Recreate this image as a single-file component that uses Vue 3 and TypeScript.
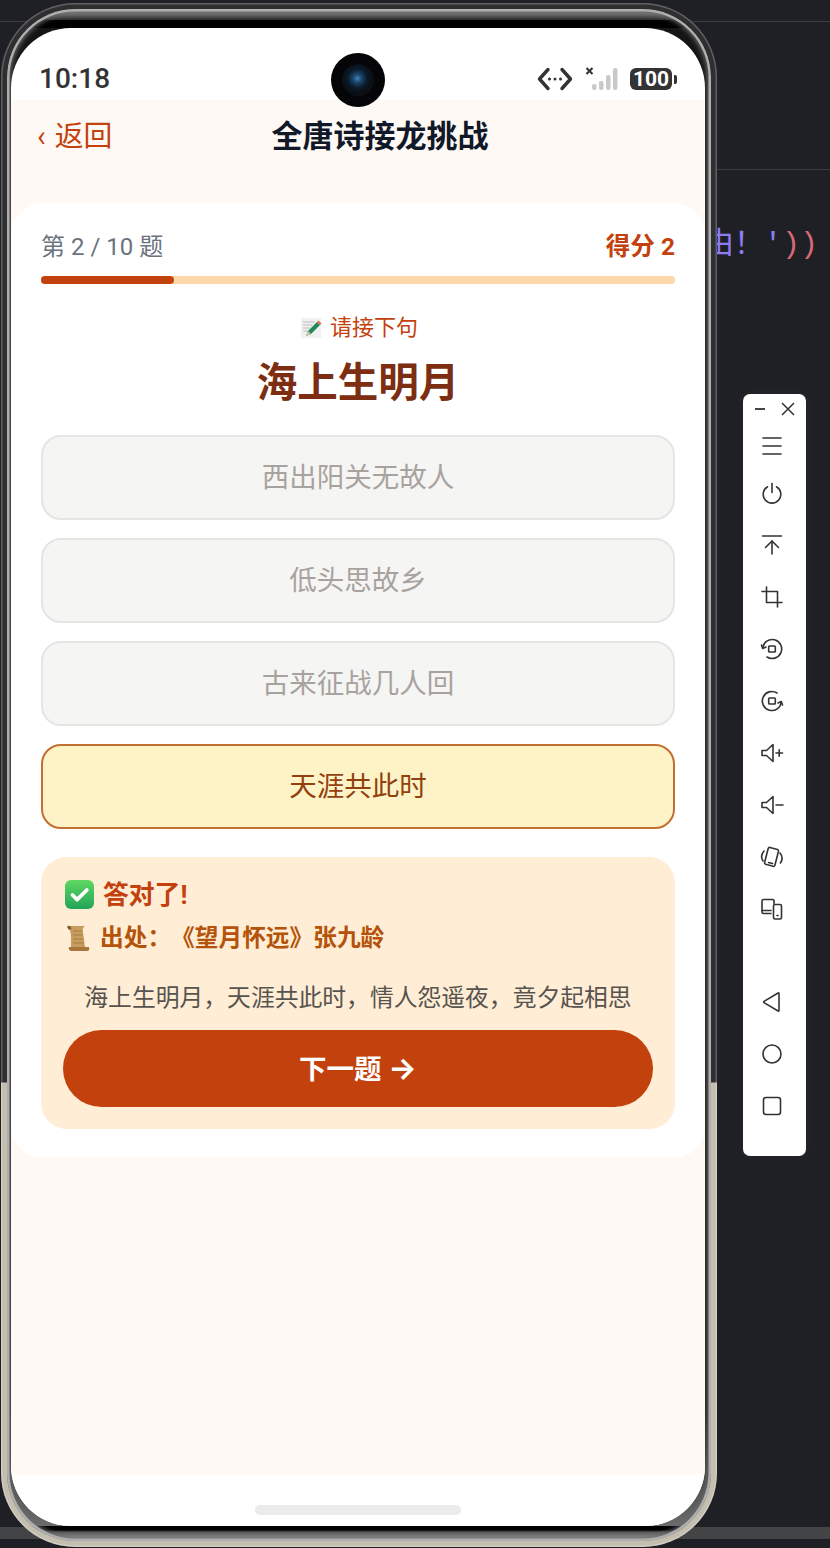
<template>
  <div class="desktop">
    <div class="bg-line line-top"></div>
    <div class="bg-line line-mid"></div>
    <div class="bg-bottom"></div>
    <div class="code-text"><span class="purple">由！'</span><span class="pink">))</span></div>

    <div class="phone">
      <div class="metal">
        <div class="screen">
          <div class="status-bar">
            <span class="time">10:18</span>
            <div class="status-icons">
              <svg width="36" height="24" viewBox="0 0 36 24" fill="none" stroke="#333" stroke-width="3.400" stroke-linecap="round" stroke-linejoin="round">
                <path d="M11 2.500 2.500 12l8.500 9.500" />
                <path d="M25 2.500 33.500 12 25 21.500" />
                <circle cx="12.500" cy="12" r="1.500" fill="#333" stroke="none" />
                <circle cx="18" cy="12" r="1.500" fill="#333" stroke="none" />
                <circle cx="23.500" cy="12" r="1.500" fill="#333" stroke="none" />
              </svg>
              <svg class="signal" width="33" height="24" viewBox="0 0 33 24" fill="#c9c9c9">
                <path d="M0.500 1 6.500 7M6.500 1 .5 7" stroke="#333" stroke-width="2" fill="none" />
                <rect x="6" y="17" width="4.500" height="6" rx="2" />
                <rect x="13" y="14" width="4.500" height="9" rx="2" />
                <rect x="20" y="8" width="4.500" height="15" rx="2" />
                <rect x="27" y="1" width="4.500" height="22" rx="2" />
              </svg>
              <div class="battery"><span class="battery-num">100</span><i class="battery-tip"></i></div>
            </div>
          </div>

          <div class="app">
            <header class="nav">
              <span class="back"><span class="chev">‹</span>返回</span>
              <h1 class="nav-title">全唐诗接龙挑战</h1>
            </header>

            <section class="card">
              <div class="progress-row">
                <span class="progress-text">第 2 / 10 题</span>
                <span class="score">得分 2</span>
              </div>
              <div class="progress-track">
                <div class="progress-fill" :style="{ width: progress + '%' }"></div>
              </div>

              <div class="hint">
                <svg width="22" height="22" viewBox="0 0 22 22">
                  <rect x="1" y="1" width="20" height="20" fill="#f1f1f1" />
                  <path d="M3 5h12M3 8h9M3 11h7M3 14h5" stroke="#bcbcbc" stroke-width="1" />
                  <path d="M6 19 8 14 17 5l3 3-9 9z" fill="#1f8a5c" />
                  <path d="M17 5l1.500-1.500 3 3L20 8z" fill="#e8674f" />
                  <path d="M6 19l2-5 3 3z" fill="#d9c4a0" />
                </svg>
                <span>请接下句</span>
              </div>
              <h2 class="question">海上生明月</h2>

              <div class="options">
                <div v-for="opt in options" :key="opt.text" class="option" :class="{ correct: opt.correct }">
                  {{ opt.text }}
                </div>
              </div>

              <div class="feedback">
                <div class="result">
                  <svg width="29" height="29" viewBox="0 0 29 29">
                    <defs>
                      <linearGradient id="checkBg" x1="0" y1="0" x2="0" y2="1">
                        <stop offset="0" stop-color="#5fd860" />
                        <stop offset="1" stop-color="#22a45a" />
                      </linearGradient>
                    </defs>
                    <rect width="29" height="29" rx="6" fill="url(#checkBg)" />
                    <path d="M7.500 15l4.600 4.600L21.800 10" fill="none" stroke="#fff" stroke-width="3.800" stroke-linecap="round" stroke-linejoin="round" />
                  </svg>
                  <span class="result-text">答对了!</span>
                </div>
                <div class="source">
                  <svg width="24" height="27" viewBox="0 0 24 27">
                    <path d="M2 1h17c-2 1-2.500 3-2 6l2 15H5C5 15 6 7 2 1z" fill="#c79c5f" />
                    <path d="M7 6h9M7 10h9M7 14h10M7 18h11" stroke="#a87c41" stroke-width="1" />
                    <path d="M1 2C2 0 5 0 5.500 4L3 5z" fill="#8a5a28" />
                    <path d="M3 22h20c.800 2 0 4-2 4H6c-2.500 0-4-2-3-4z" fill="#a8753a" />
                  </svg>
                  <span>出处：《望月怀远》张九龄</span>
                </div>
                <p class="verse">海上生明月，天涯共此时，情人怨遥夜，竟夕起相思</p>
                <button class="next-btn">下一题 <span class="arrow">→</span></button>
              </div>
            </section>
          </div>

          <div class="home-area"><div class="home-bar"></div></div>
        </div>
        <div class="camera"><i class="lens"></i></div>
      </div>
    </div>

    <aside class="toolbar">
      <div class="tool-top">
        <svg width="14" height="14" viewBox="0 0 14 14" stroke="#333" stroke-width="1.800" fill="none"><path d="M2 7h10" /></svg>
        <svg width="16" height="16" viewBox="0 0 16 16" stroke="#333" stroke-width="1.500" fill="none"><path d="M2 2l12 12M14 2 2 14" /></svg>
      </div>
      <div v-for="(group, g) in toolGroups" :key="g" class="tool-group">
        <div v-for="(icon, i) in group" :key="i" class="tool">
          <svg width="24" height="24" viewBox="0 0 24 24" fill="none" stroke="#333" stroke-width="1.600" stroke-linecap="round" stroke-linejoin="round">
            <path v-for="(d, k) in icon" :key="k" :d="d" />
          </svg>
        </div>
      </div>
    </aside>
  </div>
</template>

<script setup lang="ts">
interface Option {
  text: string
  correct?: boolean
}

const progress = 21

const options: Option[] = [
  { text: '西出阳关无故人' },
  { text: '低头思故乡' },
  { text: '古来征战几人回' },
  { text: '天涯共此时', correct: true }
]

// each icon is a list of path strokes
const toolGroups: string[][][] = [
  [
    ['M3 4h18', 'M3 12h18', 'M3 20h18'],
    ['M12 2.500v9', 'M7.500 5.800a8.800 8.800 0 1 0 9 0'],
    ['M2.500 3h19', 'M12 21V8', 'M5.500 14.500 12 8l6.500 6.500'],
    ['M6.500 2v15.500H22', 'M2 6.500h15.500V22'],
    ['M2.700 11A9.500 9.500 0 1 1 7 20', 'M1.500 8l1.200 3.500L6 10', 'M9.500 9h5a.8.8 0 0 1 .8.8v4.400a.8.8 0 0 1-.8.8h-5a.8.8 0 0 1-.8-.8V9.800a.8.8 0 0 1 .8-.8z'],
    ['M21.300 13A9.500 9.500 0 1 1 17 4', 'M22.500 16l-1.200-3.500L18 14', 'M9.500 9h5a.8.8 0 0 1 .8.8v4.400a.8.8 0 0 1-.8.8h-5a.8.8 0 0 1-.8-.8V9.800a.8.8 0 0 1 .8-.8z'],
    ['M2 9.500h4.500L13 3.500v17l-6.500-6H2z', 'M16 12h6.500', 'M19.200 8.700v6.600'],
    ['M2 9.500h4.500L13 3.500v17l-6.500-6H2z', 'M16 12h7'],
    ['M10 2.500l7.500 2a1.500 1.500 0 0 1 1 1.800l-3.600 14a1.500 1.500 0 0 1-1.800 1l-7.500-2a1.500 1.500 0 0 1-1-1.800l3.600-14a1.500 1.500 0 0 1 1.800-1z', 'M8.500 17.500l4 1', 'M4 6C1.500 9 1 13 3 16', 'M20 8c2.500 3 2.500 7 .5 10'],
    ['M14 6.500V4A1.500 1.500 0 0 0 12.500 2.500h-9A1.500 1.500 0 0 0 2 4v11A1.500 1.500 0 0 0 3.500 16.500H11', 'M2 13.500h9', 'M15 7.500h5A1.500 1.500 0 0 1 21.500 9v11.500A1.500 1.500 0 0 1 20 22h-5a1.500 1.500 0 0 1-1.500-1.500V9A1.500 1.500 0 0 1 15 7.500z', 'M17 18.500h1']
  ],
  [
    ['M19 3.500v17a.6.6 0 0 1-.9.5L4 12.600a.7.7 0 0 1 0-1.200L18.100 3a.6.6 0 0 1 .9.5z'],
    ['M12 3a9 9 0 1 0 0 18 9 9 0 0 0 0-18z'],
    ['M6 3.500h12A2.500 2.500 0 0 1 20.500 6v12a2.500 2.500 0 0 1-2.500 2.500H6A2.500 2.500 0 0 1 3.500 18V6A2.500 2.500 0 0 1 6 3.500z']
  ]
]
</script>

<style>
html,
body {
  margin: 0;
  background: #1f2025;
}
</style>

<style scoped>
.desktop {
  position: relative;
  width: 830px;
  height: 1548px;
  overflow: hidden;
  background: #1f2025;
  font-family: Roboto, 'Noto Sans CJK SC', sans-serif;
  text-spacing-trim: space-all;
}

.bg-line {
  position: absolute;
  height: 1px;
  background: #3c3d41;
}

.line-top {
  left: 0;
  right: 0;
  top: 21px;
}

.line-mid {
  left: 700px;
  right: 0;
  top: 169px;
}

.bg-bottom {
  position: absolute;
  left: 0;
  right: 0;
  top: 1527px;
  height: 12px;
  background: #434445;
}

.code-text {
  position: absolute;
  left: 704px;
  top: 228px;
  font: 30px/34px 'Liberation Mono', 'Noto Sans CJK SC', monospace;
  white-space: nowrap;
}

.purple {
  color: #8f7bf5;
}

.pink {
  color: #d9687a;
}

/* phone frame */
.phone {
  position: absolute;
  left: 1px;
  top: 3px;
  width: 716px;
  height: 1544px;
  box-sizing: border-box;
  padding: 6px;
  border-radius: 74px;
  background: linear-gradient(to bottom, #2f2f31 0, #2f2f31 1079px, #c4beaf 1080px, #c4beaf 100%);
  box-shadow: inset 0 0 0 1.500px rgba(255, 255, 255, 0.24);
}

.metal {
  position: relative;
  height: 100%;
  box-sizing: border-box;
  padding: 19px 6px 15px 4px;
  border-radius: 68px;
  background:
    linear-gradient(to bottom, #8e8e8e, #777 4px, #2a2a2a 11px, #000 11px) top / 100% 19px no-repeat,
    linear-gradient(to bottom, #000 0, #000 4px, #555 6px, #aaa 14px) bottom / 100% 15px no-repeat,
    linear-gradient(to bottom, #151515 0, #151515 1400px, #777 100%);
  box-shadow: inset 0 0 0 2.500px #aeaeae, inset 0 0 5px 4px #6a6a6a;
}

.screen {
  display: flex;
  flex-direction: column;
  height: 100%;
  overflow: hidden;
  border-radius: 60px;
  background: #fff;
}

.camera {
  position: absolute;
  left: 324px;
  top: 44px;
  display: flex;
  align-items: center;
  justify-content: center;
  width: 54px;
  height: 54px;
  border-radius: 50%;
  background: #050507;
}

.lens {
  width: 32px;
  height: 32px;
  border-radius: 50%;
  background: radial-gradient(circle at 48% 45%, #3f86bd 0, #1c4468 18%, #0a1a2b 40%, #0b0e12 62%, #16181c 100%);
}

.status-bar {
  display: flex;
  flex: none;
  align-items: center;
  justify-content: space-between;
  height: 72px;
  box-sizing: border-box;
  padding: 30px 28px 0;
}

.time {
  color: #333;
  font-size: 28px;
  font-weight: 500;
  line-height: 44px;
}

.status-icons {
  display: flex;
  align-items: center;
  gap: 13px;
}

.signal {
  margin-right: -2px;
}

.battery {
  display: flex;
  align-items: center;
}

.battery-num {
  width: 42px;
  height: 22px;
  border-radius: 6px;
  background: #333;
  color: #fff;
  font-size: 21px;
  font-weight: 700;
  line-height: 22px;
  text-align: center;
}

.battery-tip {
  width: 3px;
  height: 9px;
  margin-left: 2px;
  border-radius: 0 2px 2px 0;
  background: #333;
}

.app {
  flex: 1;
  display: flex;
  flex-direction: column;
  min-height: 0;
  background: #fff9f5;
}

.nav {
  position: relative;
  display: flex;
  align-items: center;
  justify-content: center;
  flex: none;
  height: 103px;
  padding-bottom: 30px;
  box-sizing: border-box;
}

.back {
  position: absolute;
  left: 26px;
  top: 14px;
  color: #c2410c;
  font-size: 28.800px;
  line-height: 44px;
}

.chev {
  margin-right: 9px;
}

.nav-title {
  margin: 0 0 0 44px;
  color: #111827;
  font-size: 31px;
  font-weight: 700;
  line-height: 44px;
}

.card {
  height: 955px;
  box-sizing: border-box;
  padding: 24px 30px 0;
  border-radius: 32px;
  background: #fff;
}

.progress-row {
  display: flex;
  align-items: center;
  justify-content: space-between;
  height: 34px;
}

.progress-text {
  color: #6b7280;
  font-size: 24px;
}

.score {
  color: #c2410c;
  font-size: 24.500px;
  font-weight: 700;
}

.progress-track {
  height: 8px;
  margin-top: 15px;
  border-radius: 4px;
  background: #fed7aa;
}

.progress-fill {
  height: 100%;
  border-radius: 4px;
  background: #c2410c;
}

.hint {
  display: flex;
  align-items: center;
  justify-content: center;
  gap: 8px;
  margin-top: 29px;
  margin-left: 2px;
  color: #c2410c;
  font-size: 22px;
  line-height: 30px;
}

.question {
  margin: 12px 0 0;
  color: #7c2d12;
  font-size: 40.500px;
  font-weight: 700;
  line-height: 56px;
  text-align: center;
}

.options {
  display: flex;
  flex-direction: column;
  gap: 18px;
  margin-top: 24px;
}

.option {
  display: flex;
  align-items: center;
  justify-content: center;
  height: 85px;
  box-sizing: border-box;
  padding-bottom: 6px;
  border: 2px solid #e7e5e4;
  border-radius: 20px;
  background: #f5f5f4;
  color: #a8a29e;
  font-size: 27.500px;
}

.option.correct {
  border-color: #c2702f;
  background: #fef3c7;
  color: #92400e;
}

.feedback {
  height: 272px;
  margin-top: 28px;
  box-sizing: border-box;
  padding: 23px 22px 0;
  border-radius: 26px;
  background: #ffedd5;
}

.result {
  display: flex;
  align-items: center;
  gap: 9px;
  margin-left: 2px;
  color: #c2410c;
  font-size: 25.800px;
  font-weight: 700;
  line-height: 29px;
}

.result-text {
  position: relative;
  top: 1px;
}

.source {
  display: flex;
  align-items: center;
  gap: 10px;
  margin-top: 14px;
  margin-left: 3px;
  color: #b45309;
  font-size: 23.700px;
  font-weight: 700;
  line-height: 30px;
}

.verse {
  margin: 27px 0 0;
  color: #57534e;
  font-size: 23.800px;
  line-height: 36px;
  text-align: center;
}

.next-btn {
  display: block;
  width: 100%;
  height: 77px;
  margin-top: 14px;
  padding: 0 0 4px;
  border: none;
  border-radius: 39px;
  background: #c2410c;
  color: #fff;
  font-family: inherit;
  font-size: 27.500px;
  font-weight: 700;
}

.arrow {
  font-family: Inter, sans-serif;
  font-size: 30px;
}

.home-area {
  display: flex;
  flex: none;
  justify-content: center;
  height: 52px;
  background: #fff;
}

.home-bar {
  width: 206px;
  height: 10px;
  margin-top: 31px;
  border-radius: 5px;
  background: #ebebeb;
}

/* emulator sidebar */
.toolbar {
  position: absolute;
  left: 743px;
  top: 394px;
  display: flex;
  flex-direction: column;
  width: 63px;
  height: 762px;
  box-sizing: border-box;
  padding-top: 8px;
  border-radius: 7px;
  background: #fff;
  box-shadow: 0 0 10px rgba(255, 255, 255, 0.05);
}

.tool-top {
  display: flex;
  align-items: center;
  justify-content: space-between;
  height: 14px;
  padding: 0 10px;
}

.tool-group {
  display: flex;
  flex-direction: column;
  margin-top: 4px;
  padding-right: 5px;
}

.tool-group + .tool-group {
  margin-top: 41px;
}

.tool {
  display: flex;
  align-items: center;
  justify-content: center;
  height: 52px;
}

.tool-top + .tool-group .tool:first-child {
  margin-bottom: -5px;
}
</style>
